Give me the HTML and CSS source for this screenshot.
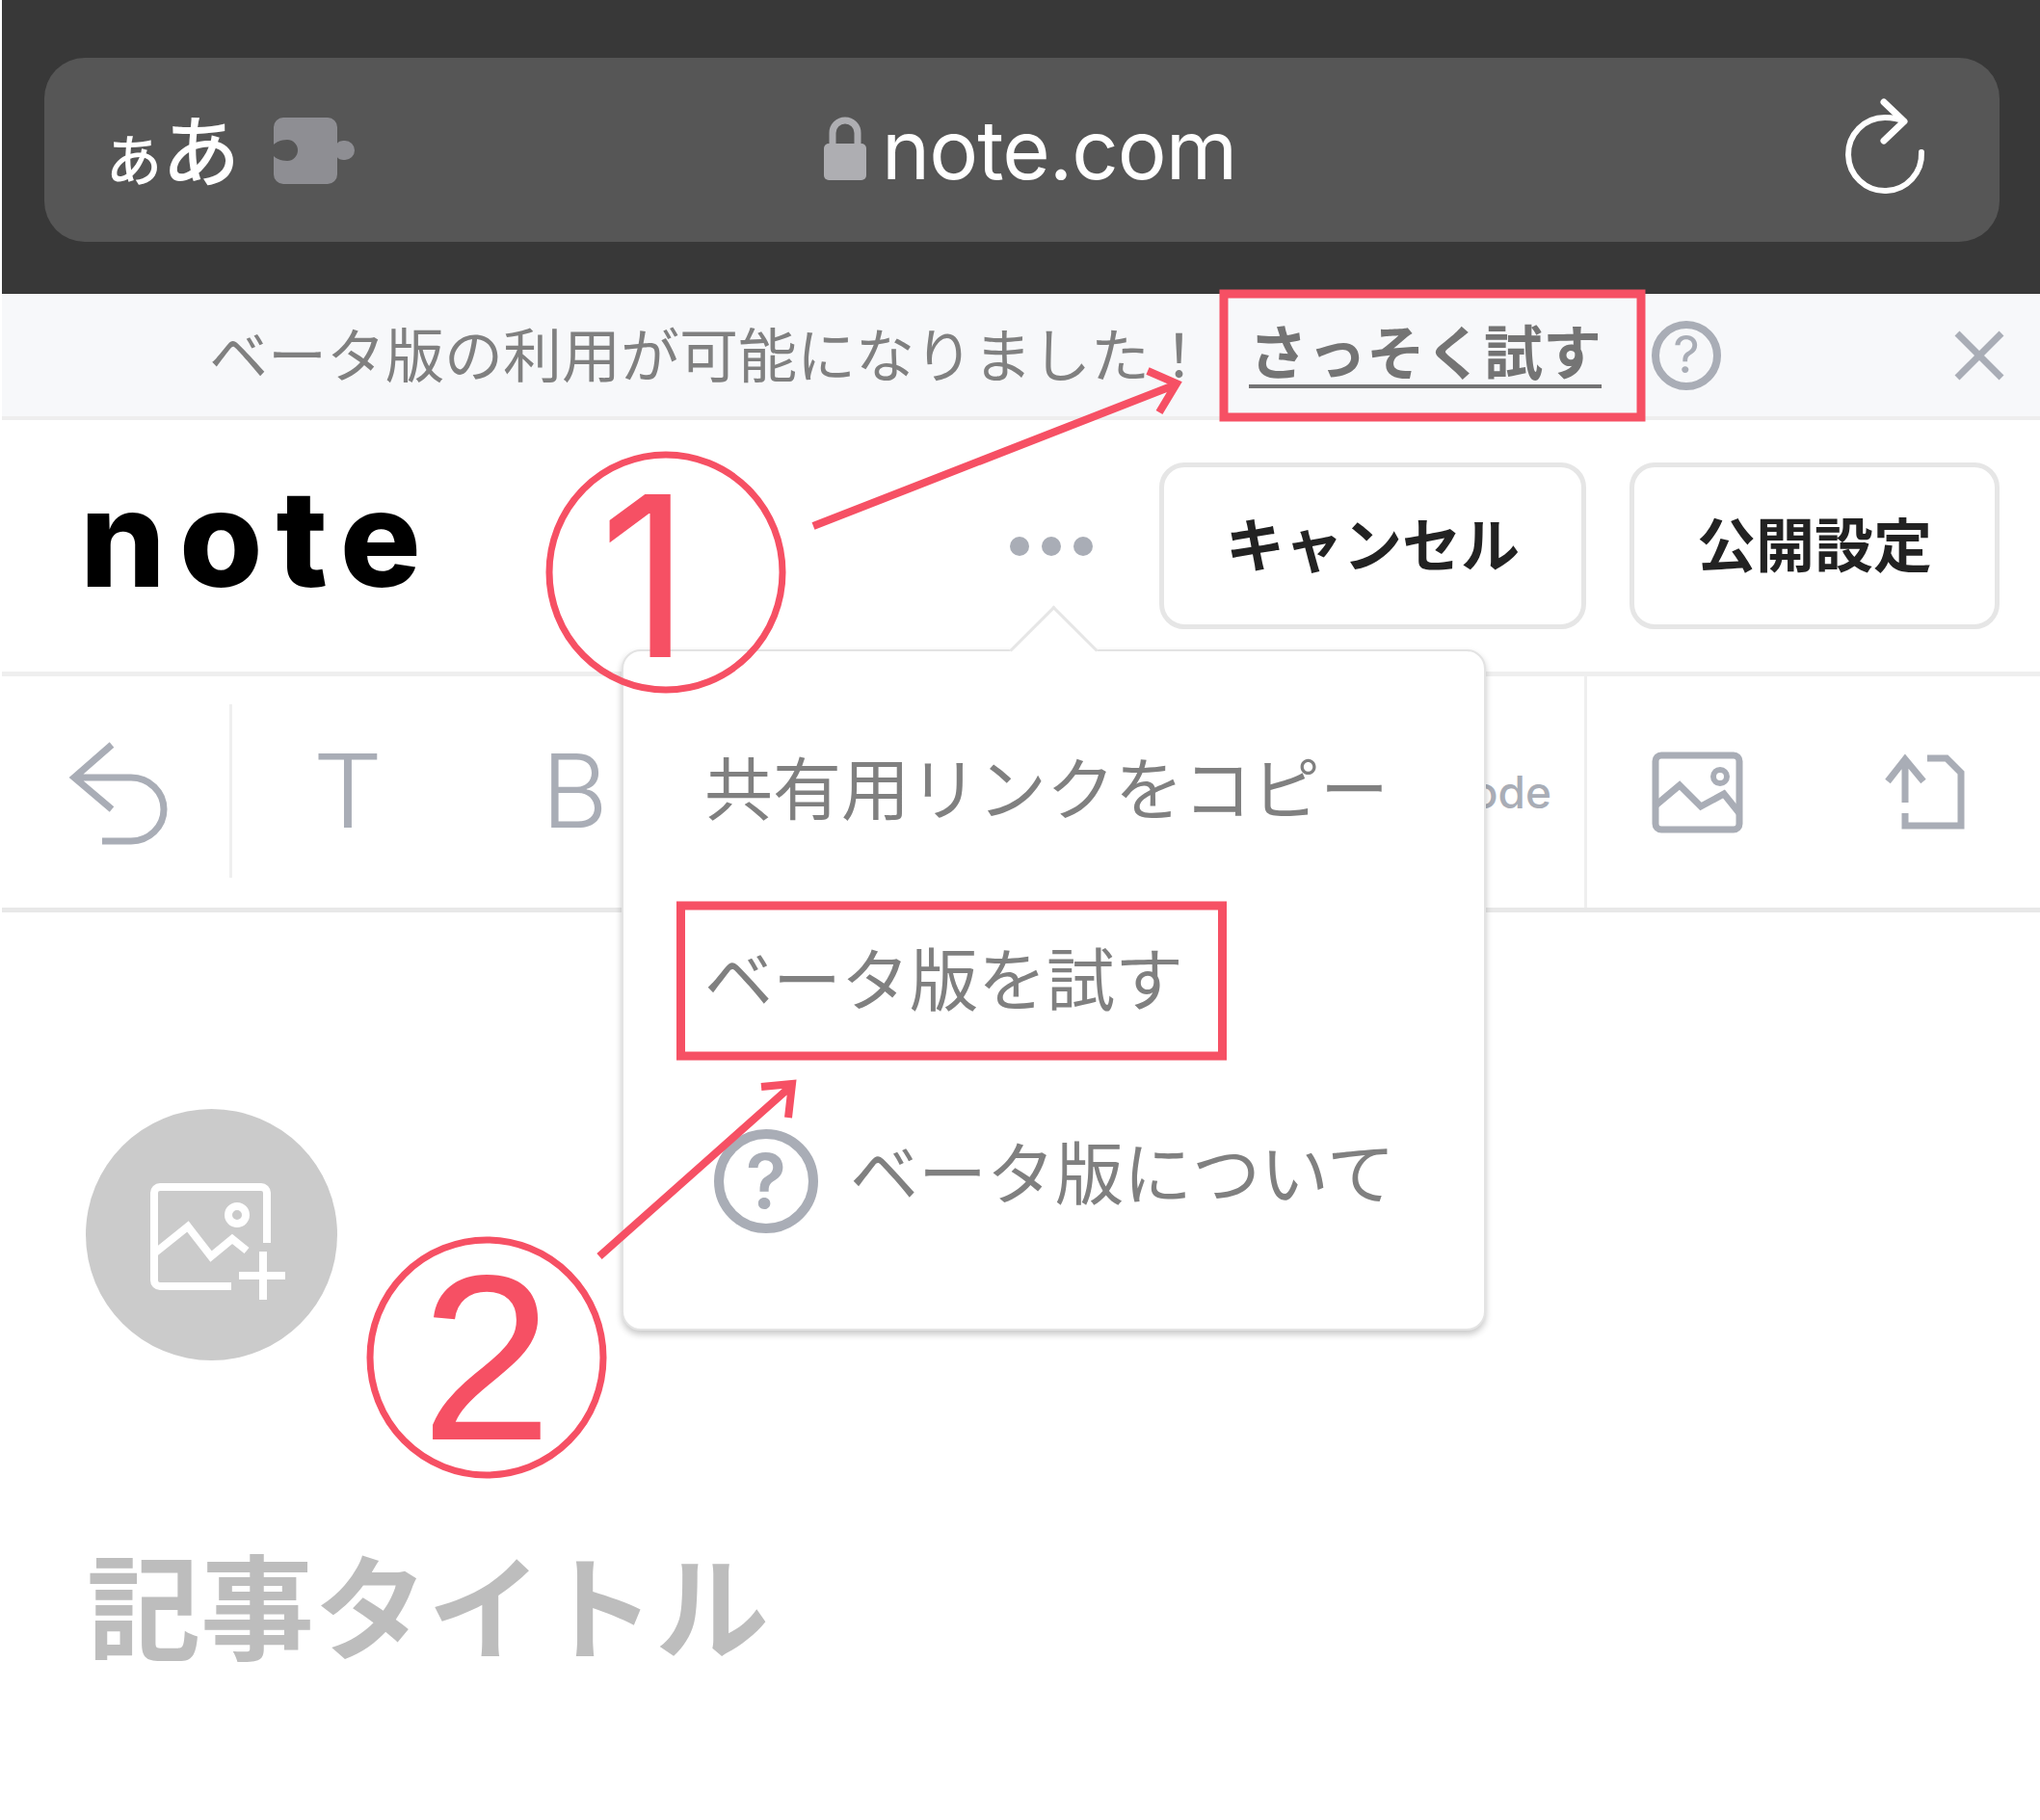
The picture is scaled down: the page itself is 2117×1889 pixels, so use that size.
FILE: index.html
```html
<!DOCTYPE html>
<html lang="ja">
<head>
<meta charset="utf-8">
<title>note</title>
<link rel="stylesheet" href="styles.css">
</head>
<body>
<div class="page">
  <header class="browser">
    <div class="address">
      <div class="addr-left">
        <span class="aa"><span class="aa-small">あ</span><span class="aa-large">あ</span></span>
        <svg class="puzzle" viewBox="284 123 84 69"><path class="puzzle-body" d="M294 123H340a10 10 0 0 1 10 10V150C351 148 353 147 358 147a10 10 0 1 1 0 20C353 167 351 166 350 164V182a10 10 0 0 1-10 10H294a10 10 0 0 1-10-10V163C286 165 291 168 298 168a11 11 0 1 0 0-22C291 146 286 149 284 151V133a10 10 0 0 1 10-10Z"/></svg>
      </div>
      <div class="addr-center">
        <svg class="lock" viewBox="855 120 44 68"><path class="lock-shackle" d="M864 152V139a13 13 0 0 1 26 0V152"/><rect class="lock-body" x="855" y="150" width="44" height="38" rx="5"/></svg>
        <span class="domain">note.com</span>
      </div>
      <svg class="reload" viewBox="1915 102 84 100"><path class="reload-line" d="M1993 159A38 38 0 1 1 1955 123C1962 123 1969 124 1975 127"/><path class="reload-head" d="M1954 107L1975 127L1954 147"/></svg>
    </div>
  </header>

  <section class="notice">
    <span class="notice-text">ベータ版の利用が可能になりました！</span>
    <a class="notice-link">さっそく試す</a>
    <svg class="notice-help" viewBox="0 0 72 72"><circle class="ring" cx="36" cy="36" r="32"/><text class="ring-mark" x="36" y="54">?</text></svg>
    <svg class="notice-close" viewBox="0 0 50 50"><path class="close-line" d="M2 2L48 48M48 2L2 48"/></svg>
  </section>

  <section class="topbar">
    <span class="logo">note</span>
    <div class="dots"><i class="dot"></i><i class="dot"></i><i class="dot"></i></div>
    <button class="btn btn-cancel">キャンセル</button>
    <button class="btn btn-publish">公開設定</button>
  </section>

  <section class="toolbar">
    <svg class="tool-undo" viewBox="70 768 105 108"><path class="tool-line" d="M115 771L76 805L115 838M76 805H135a34 33 0 0 1 0 66H105"/></svg>
    <div class="tool-sep"></div>
    <span class="tool-t">T</span>
    <span class="tool-b">B</span>
    <span class="tool-code">code</span>
    <div class="tool-divider"></div>
    <svg class="tool-image" viewBox="1712 777 98 89"><rect class="tool-line" x="1716" y="783" width="87" height="77" rx="6"/><path class="tool-line" d="M1716 835L1741 814L1763 836L1787 823L1803 843"/><circle class="tool-thin" cx="1783" cy="805" r="7"/></svg>
    <svg class="tool-upload" viewBox="1955 780 85 80"><path class="tool-line" d="M1978 788V832M1960 810L1978 787L1997 810M2001 786H2021L2036 801V856H1978V843"/></svg>
  </section>

  <main class="content">
    <div class="avatar">
      <svg class="avatar-icon" viewBox="154 1222 146 128"><path class="avatar-line" d="M278 1288V1236a6 6 0 0 0-6-6H167a6 6 0 0 0-6 6V1327a6 6 0 0 0 6 6H241M161 1299L196 1271L220 1302L242 1284L257 1296M249 1322H297M274 1297V1347"/><circle class="avatar-line" cx="247" cy="1259" r="9"/></svg>
    </div>
    <h1 class="title">記事タイトル</h1>
  </main>
</div>

<div class="popup">
  <div class="popup-item">共有用リンクをコピー</div>
  <div class="popup-item">ベータ版を試す</div>
  <div class="popup-item popup-about">
    <svg class="popup-help" viewBox="0 0 108 108"><circle class="ring-bold" cx="54" cy="54" r="49"/><text class="ring-bold-mark" x="54" y="82">?</text></svg>
    <span>ベータ版について</span>
  </div>
</div>

<svg class="annotations" viewBox="0 0 2117 1889">
  <rect class="mark-box" x="1270" y="305" width="433" height="128"/>
  <rect class="mark-box" x="706.5" y="940" width="562" height="156"/>
  <ellipse class="mark-ring" cx="691" cy="594" rx="121" ry="122"/>
  <ellipse class="mark-ring" cx="505" cy="1409" rx="121" ry="122"/>
  <path class="mark-arrow" d="M844 546L1218 400M1191 385L1221 398L1203 428"/>
  <path class="mark-arrow" d="M622 1304L819 1129M790 1128L822 1125L818 1160"/>
  <text class="mark-one" x="716" y="682">1</text>
  <text class="mark-two" x="505" y="1494">2</text>
</svg>
</body>
</html>
```
FILE: styles.css
```css
* { box-sizing: border-box; }
html, body { margin: 0; padding: 0; background: #fff; }
body {
  position: relative;
  width: 2117px;
  height: 1889px;
  overflow: hidden;
  font-family: "Noto Sans CJK JP", "Noto Sans", sans-serif;
}
.page { padding-left: 2px; }
svg { display: block; flex: none; overflow: visible; }

/* browser chrome */
.browser { height: 305px; background: #383838; padding: 60px 42px 0 44px; }
.address {
  height: 191px;
  background: #565656;
  border-radius: 42px;
  padding: 0 75px 0 64px;
  display: flex;
  align-items: center;
  position: relative;
}
.addr-left { display: flex; align-items: center; gap: 35px; }
.aa { display: flex; align-items: flex-end; color: #fff; font-weight: 500; line-height: 1; width: 139px; margin-top: -8px; }
.aa-small { font-size: 58px; }
.aa-large { font-size: 81px; }
.puzzle { width: 84px; height: 69px; margin-top: 1px; }
.puzzle-body { fill: #8e8e93; }
.addr-center { display: flex; align-items: center; gap: 16px; margin-left: 487px; }
.lock { width: 44px; height: 68px; margin-top: -5px; }
.lock-shackle { fill: none; stroke: #aeaeb2; stroke-width: 7; }
.lock-body { fill: #aeaeb2; }
.domain { font-family: "Inter", sans-serif; font-size: 85px; color: #fff; line-height: 1; margin-top: -1px; letter-spacing: -1px; }
.reload { width: 84px; height: 100px; margin-left: auto; margin-top: -10px; }
.reload-line { fill: none; stroke: #fff; stroke-width: 6; stroke-linecap: round; }
.reload-head { fill: none; stroke: #fff; stroke-width: 7; stroke-linecap: round; stroke-linejoin: round; }

/* notice */
.notice {
  height: 131px;
  background: #f7f8fa;
  border-bottom: 4px solid #eeeeee;
  padding-left: 215px;
  display: flex;
  align-items: center;
  color: #808080;
}
.notice-text { font-size: 61px; font-weight: 400; line-height: 1; margin-top: -7px; }
.notice-link {
  font-size: 61px;
  font-weight: 700;
  line-height: 1;
  color: #747474;
  margin-left: 42px;
  margin-top: -8px;
  padding-bottom: 4px;
  text-decoration: underline;
  text-decoration-thickness: 4px;
  text-underline-offset: 10px;
}
.notice-help { width: 72px; height: 72px; margin-left: 52px; }
.ring { fill: none; stroke: #a9adb6; stroke-width: 8; }
.ring-mark { font-family: "Inter", sans-serif; font-size: 54px; fill: #a9adb6; text-anchor: middle; }
.notice-close { width: 50px; height: 50px; margin-left: auto; margin-right: 38px; }
.close-line { fill: none; stroke: #a9adb6; stroke-width: 7; }

/* top bar */
.topbar {
  height: 266px;
  border-bottom: 5px solid #efefef;
  padding: 0 42px 0 81px;
  display: flex;
  align-items: center;
}
.logo {
  font-family: "Inter", sans-serif;
  font-weight: 800;
  font-size: 140px;
  line-height: 1;
  letter-spacing: 14px;
  color: #000;
  margin-top: -18px;
}
.dots { display: flex; gap: 13px; margin-left: auto; margin-right: 69px; }
.dot { width: 20px; height: 20px; border-radius: 50%; background: #a9adb6; display: block; }
.btn {
  height: 173px;
  border: 5px solid #e6e6e6;
  border-radius: 26px;
  background: #fff;
  color: #222;
  font-family: inherit;
  font-size: 61px;
  font-weight: 700;
  padding: 0 0 9px;
}
.btn-cancel { width: 443px; margin-right: 45px; }
.btn-publish { width: 384px; }

/* tool bar */
.toolbar {
  height: 245px;
  border-bottom: 5px solid #e8e8e8;
  padding-left: 69px;
  display: flex;
  align-items: center;
  color: #a9adb6;
}
.tool-undo { width: 105px; height: 108px; margin-top: 3px; }
.tool-line { fill: none; stroke: #a9adb6; stroke-width: 7; }
.tool-thin { fill: none; stroke: #a9adb6; stroke-width: 6; }
.tool-sep { width: 3px; height: 180px; background: #efefef; margin-left: 62px; margin-top: -2px; }
.tool-t, .tool-b {
  font-family: "Inter", sans-serif;
  font-weight: 300;
  font-size: 106px;
  line-height: 1;
  text-align: center;
  margin-top: -2px;
}
.tool-t { width: 70px; margin-left: 85px; transform: scaleX(1.08); }
.tool-b { width: 60px; margin-left: 166px; }
.tool-code {
  font-family: "Inter", sans-serif;
  font-size: 46px;
  font-weight: 500;
  width: 160px;
  text-align: right;
  margin-left: 828px;
  line-height: 1;
  margin-top: 0;
}
.tool-divider { width: 3px; align-self: stretch; background: #efefef; margin-left: 34px; }
.tool-image { width: 98px; height: 89px; margin-left: 67px; margin-top: 0; }
.tool-upload { width: 85px; height: 80px; margin-left: 142px; margin-top: -2px; }

/* content */
.content { padding: 204px 0 0 87px; }
.avatar {
  width: 261px;
  height: 261px;
  border-radius: 50%;
  background: #cbcbcb;
  display: flex;
  align-items: center;
  justify-content: center;
}
.avatar-icon { width: 146px; height: 128px; margin: 13px 0 0 13px; }
.avatar-line { fill: none; stroke: #fff; stroke-width: 8; }
.title {
  margin: 192px 0 0 1px;
  font-size: 118px;
  font-weight: 700;
  line-height: 1;
  color: #bdbdbd;
}

/* popup */
.popup {
  position: absolute;
  left: 645px;
  top: 674px;
  width: 897px;
  height: 707px;
  background: #fff;
  border: 2px solid #e3e3e3;
  border-radius: 20px;
  box-shadow: 0 4px 7px rgba(0, 0, 0, 0.22);
  padding: 39px 0 0 84px;
  color: #808080;
  font-size: 71px;
  font-weight: 400;
}
.popup::before {
  content: "";
  position: absolute;
  left: 414px;
  top: -34px;
  width: 62px;
  height: 62px;
  background: #fff;
  border-top: 3px solid #e6e6e6;
  border-left: 3px solid #e6e6e6;
  transform: rotate(45deg);
}
.popup-item { height: 198px; display: flex; align-items: center; position: relative; line-height: 1; }
.popup-about { height: 205px; gap: 33px; margin-left: 10px; }
.popup-help { width: 108px; height: 108px; margin-top: 24px; }
.ring-bold { fill: none; stroke: #a9adb6; stroke-width: 10; }
.ring-bold-mark { font-family: "Inter", sans-serif; font-weight: 600; font-size: 78px; fill: #a9adb6; text-anchor: middle; }

/* annotations drawn over the screenshot */
.annotations { position: absolute; left: 0; top: 0; width: 2117px; height: 1889px; pointer-events: none; }
.mark-box { fill: none; stroke: #f65064; stroke-width: 9; }
.mark-ring { fill: none; stroke: #f65064; stroke-width: 7; }
.mark-arrow { fill: none; stroke: #f65064; stroke-width: 8; }
.mark-one { font-family: "Inter", sans-serif; font-size: 232px; fill: #f65064; text-anchor: end; }
.mark-two { font-family: "Liberation Sans", sans-serif; font-size: 245px; fill: #f65064; text-anchor: middle; }
```
